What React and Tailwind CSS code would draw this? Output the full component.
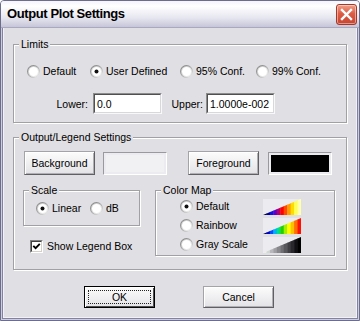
import React from "react";

function Radio({ checked }) {
  return (
    <svg width="13" height="13" viewBox="0 0 13 13" className="block shrink-0">
      <defs>
        <linearGradient id="rOuter" x1="0" y1="0" x2="1" y2="1">
          <stop offset="0" stopColor="#7a7a7a" />
          <stop offset="0.55" stopColor="#a9a9a9" />
          <stop offset="1" stopColor="#ffffff" />
        </linearGradient>
        <linearGradient id="rInner" x1="0" y1="0" x2="1" y2="1">
          <stop offset="0" stopColor="#c4c4c4" />
          <stop offset="1" stopColor="#f6f6f6" />
        </linearGradient>
      </defs>
      <circle cx="6.5" cy="6.5" r="6.5" fill="url(#rOuter)" />
      <circle cx="6.5" cy="6.5" r="5.5" fill="url(#rInner)" />
      <circle cx="6.5" cy="6.5" r="4.5" fill="#ffffff" />
      {checked && <circle cx="6.5" cy="6.5" r="2" fill="#111111" />}
    </svg>
  );
}

function RadioItem({ label, checked, className = "" }) {
  return (
    <div className={`flex items-center gap-[3px] h-[13px] ${className}`}>
      <Radio checked={checked} />
      <span className="leading-[13px] whitespace-nowrap">{label}</span>
    </div>
  );
}

function Checkbox() {
  return (
    <div className="w-[13px] h-[13px] shrink-0 border border-t-[#808080] border-l-[#808080] border-b-white border-r-white">
      <div className="w-full h-full border border-t-[#404040] border-l-[#404040] border-b-[#d4d0c8] border-r-[#d4d0c8] bg-white">
        <svg width="9" height="9" viewBox="0 0 9 9" className="block">
          <path d="M1.3 3.8 L3.6 6.1 L7.8 1.9" stroke="#000" strokeWidth="1.9" fill="none" />
        </svg>
      </div>
    </div>
  );
}

function Group({ label, className = "", children }) {
  return (
    <div
      className={`relative border border-[#a0a0a5] shadow-[inset_1px_1px_0_#ffffff,1px_1px_0_#ffffff] ${className}`}
    >
      <span className="absolute left-[5px] top-[-7px] px-[2px] bg-[#e0dfe3] leading-[12px] whitespace-nowrap">
        {label}
      </span>
      {children}
    </div>
  );
}

function Button({ children, isDefault = false, className = "" }) {
  if (isDefault) {
    return (
      <div
        className={`relative flex items-center justify-center border border-black bg-[linear-gradient(to_bottom,#fcfcfc,#e4e4e8)] shadow-[inset_1px_1px_0_#ffffff,inset_-1px_-1px_0_#505050] ${className}`}
      >
        <span className="absolute inset-[3px] border border-dotted border-[#222]" />
        <span className="leading-[12px]">{children}</span>
      </div>
    );
  }
  return (
    <div
      className={`flex items-center justify-center border border-t-[#a4a4a8] border-l-[#a4a4a8] border-b-[#606064] border-r-[#606064] bg-[linear-gradient(to_bottom,#fcfcfc,#e3e3e7)] shadow-[inset_1px_1px_0_#ffffff,inset_-1px_-1px_0_#b0b0b4] ${className}`}
    >
      <span className="leading-[12px]">{children}</span>
    </div>
  );
}

function TextBox({ value }) {
  return (
    <div className="w-[69px] h-[21px] border border-t-[#8c8c8c] border-l-[#8c8c8c] border-b-[#f8f8f8] border-r-[#f8f8f8]">
      <div className="w-full h-full border border-t-[#505050] border-l-[#505050] border-b-[#d8d8dc] border-r-[#d8d8dc] bg-white flex items-center pl-[2px]">
        <span className="leading-[12px]">{value}</span>
      </div>
    </div>
  );
}

function Swatch({ fill }) {
  return (
    <div className="w-[64px] h-[23px] mt-[1px] border border-t-[#9a9a9e] border-l-[#9a9a9e] border-b-[#ffffff] border-r-[#ffffff]">
      <div className={`w-full h-full border-2 border-[#ececf0] ${fill}`} />
    </div>
  );
}

function Ramp({ colors, id }) {
  const n = colors.length;
  const sw = 38 / n;
  return (
    <svg width="38" height="16" viewBox="0 0 38 16" className="block">
      <defs>
        <clipPath id={id}>
          <polygon points="0,16 38,0 38,16" />
        </clipPath>
      </defs>
      <rect width="38" height="16" fill="#ececf0" />
      <g clipPath={`url(#${id})`}>
        {colors.map((c, i) => (
          <rect key={i} x={i * sw} y="0" width={sw + 0.4} height="16" fill={c} />
        ))}
      </g>
    </svg>
  );
}

const hot = ["#000040", "#000090", "#1010e0", "#5a00c8", "#b00070", "#ff0000", "#ff4a00", "#ff9a00", "#ffdc00", "#ffff50", "#ffffb0"];
const rainbow = ["#000050", "#0000c0", "#0050ff", "#00b0ff", "#00e080", "#20d000", "#a0f000", "#ffff00", "#ffc000", "#ff7000", "#ff1000"];
const gray = ["#e6f2e6", "#d0d8d0", "#b8b8bc", "#a0a0a4", "#88888c", "#707074", "#58585c", "#404044", "#28282c", "#101014", "#000000"];

export default function App() {
  return (
    <div className="w-[360px] h-[321px] flex flex-col border border-[#6c6c8c] rounded-t-[4px] overflow-hidden font-['Liberation_Sans',Arial,sans-serif] text-[10.5px] text-black bg-[#e0dfe3]">
      {/* Title bar */}
      <div className="h-[27px] shrink-0 flex items-center justify-between pl-[6px] pr-[2px] bg-[linear-gradient(to_bottom,#f4f4fa_0%,#ffffff_20%,#e6e6f0_65%,#c6c6d8_100%)] border-b border-[#a8a8c0]">
        <span className="font-bold text-[13px] tracking-[-0.4px] leading-[14px]">Output Plot Settings</span>
        <div className="w-[21px] h-[21px] rounded-[3px] border border-[#a63628] bg-[linear-gradient(to_bottom,#f0a08a,#dc5d46_45%,#c8442f)] shadow-[inset_0_0_0_1px_rgba(255,255,255,0.45)]">
          <svg width="19" height="19" viewBox="0 0 19 19" className="block">
            <path d="M5 5 L14 14 M14 5 L5 14" stroke="#ffffff" strokeWidth="2.4" strokeLinecap="square" />
          </svg>
        </div>
      </div>

      {/* Frame + body */}
      <div className="flex-1 flex flex-col border-x border-b border-[#cdcdde]">
        <div className="flex-1 flex flex-col border-x border-b border-[#8282a2]">
          <div className="flex-1 flex flex-col border-x border-b border-[#f2f2f6]">
            <div className="flex-1 flex flex-col bg-[#e0dfe3] px-[9px] pt-[16px]">
              {/* Limits */}
              <Group label="Limits" className="pt-[20px] pb-[8px]">
                <div className="flex pl-[13px]">
                  <RadioItem label="Default" className="w-[63px]" />
                  <RadioItem label="User Defined" checked className="w-[90px]" />
                  <RadioItem label="95% Conf." className="w-[76px]" />
                  <RadioItem label="99% Conf." />
                </div>
                <div className="flex items-center mt-[15px] pl-[34px]">
                  <span className="w-[40px] text-right leading-[12px]">Lower:</span>
                  <div className="ml-[5px]">
                    <TextBox value="0.0" />
                  </div>
                  <span className="w-[41px] text-right leading-[12px]">Upper:</span>
                  <div className="ml-[3px]">
                    <TextBox value="1.0000e-002" />
                  </div>
                </div>
              </Group>

              {/* Output / Legend */}
              <Group label="Output/Legend Settings" className="mt-[14px] pt-[13px] pb-[13px]">
                <div className="flex items-start pl-[10px]">
                  <Button className="w-[71px] h-[24px]">Background</Button>
                  <div className="ml-[8px]">
                    <Swatch fill="bg-[#f1f1f3]" />
                  </div>
                  <Button className="w-[71px] h-[24px] ml-[21px]">Foreground</Button>
                  <div className="ml-[9px]">
                    <Swatch fill="bg-black" />
                  </div>
                </div>
                <div className="flex items-start mt-[15px] pl-[9px]">
                  <div className="w-[117px] flex flex-col">
                    <Group label="Scale" className="h-[36px]">
                      <div className="flex items-center h-full pl-[12px]">
                        <RadioItem label="Linear" checked className="w-[54px]" />
                        <RadioItem label="dB" />
                      </div>
                    </Group>
                    <div className="flex items-center gap-[4px] mt-[14px] pl-[7px]">
                      <Checkbox />
                      <span className="leading-[13px]">Show Legend Box</span>
                    </div>
                  </div>
                  <Group label="Color Map" className="ml-[15px] w-[180px] h-[66px] pt-[6px] pl-[24px]">
                    <div className="flex items-center h-[19px]">
                      <RadioItem label="Default" checked className="w-[83px]" />
                      <Ramp colors={hot} id="rampHot" />
                    </div>
                    <div className="flex items-center h-[19px]">
                      <RadioItem label="Rainbow" className="w-[83px]" />
                      <Ramp colors={rainbow} id="rampRainbow" />
                    </div>
                    <div className="flex items-center h-[19px]">
                      <RadioItem label="Gray Scale" className="w-[83px]" />
                      <Ramp colors={gray} id="rampGray" />
                    </div>
                  </Group>
                </div>
              </Group>

              {/* Bottom buttons */}
              <div className="flex mt-[16px] pl-[71px]">
                <Button isDefault className="w-[71px] h-[22px]">OK</Button>
                <Button className="w-[71px] h-[22px] ml-[48px]">Cancel</Button>
              </div>
            </div>
          </div>
        </div>
      </div>
    </div>
  );
}
